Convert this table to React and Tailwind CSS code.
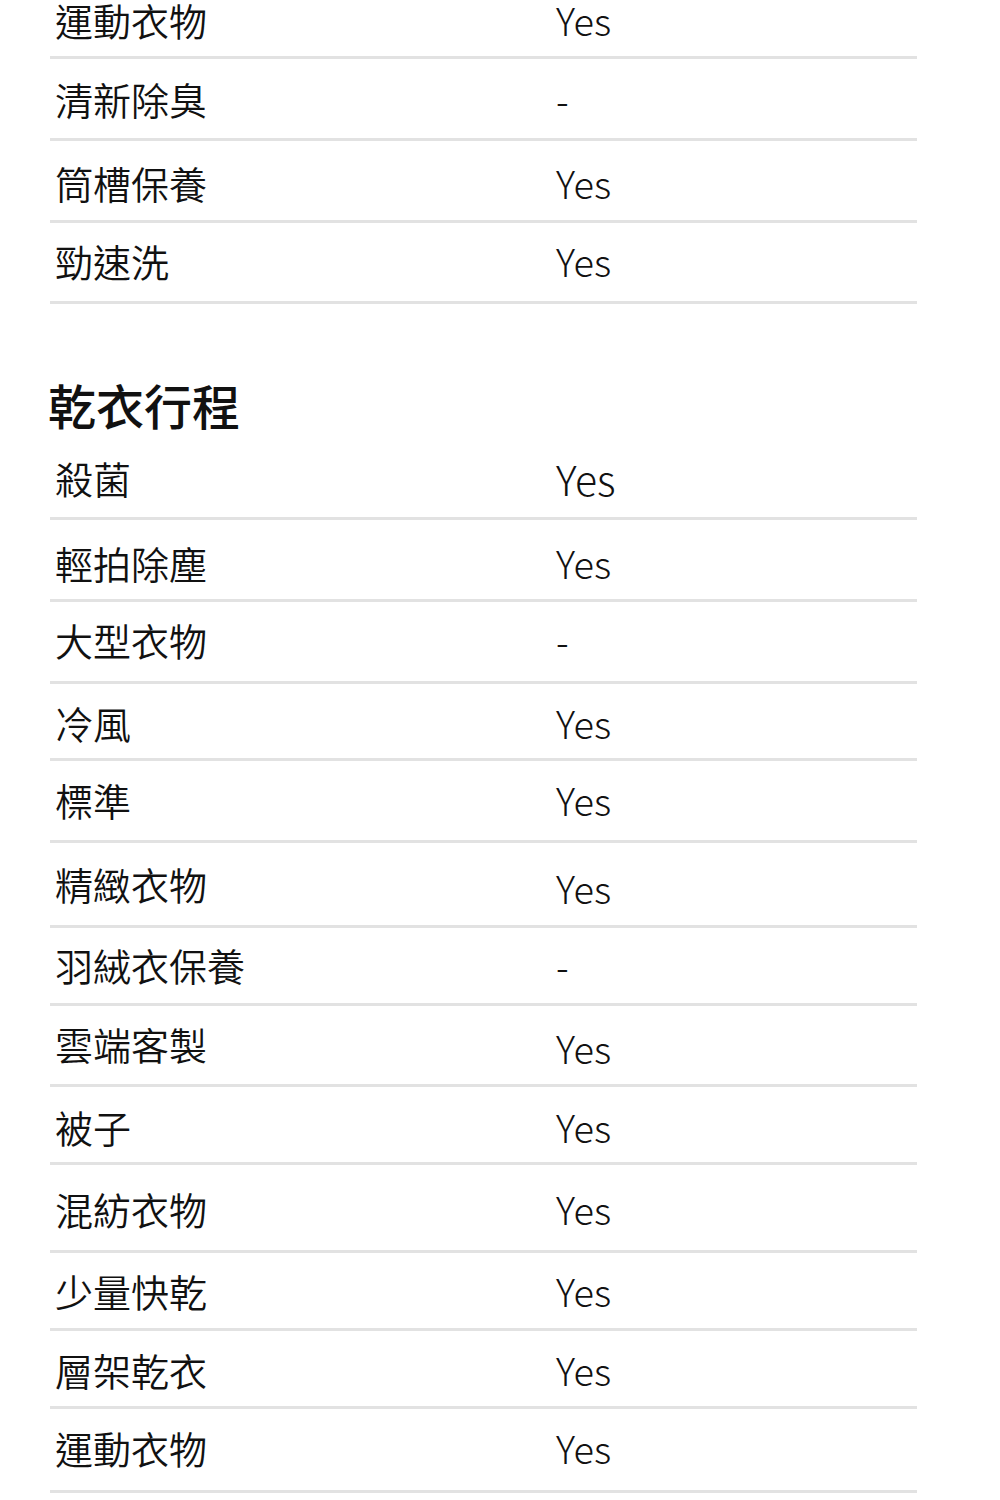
import React from 'react';

// wash / dry program rows: cls = row box height + offset of text from row top
const washRows = [
  { label: '運動衣物', value: 'Yes', cls: 'h-[59px] pt-[1px]' },
  { label: '清新除臭', value: '-', cls: 'h-[82px] pt-[21px]' },
  { label: '筒槽保養', value: 'Yes', cls: 'h-[82px] pt-[23px]' },
  { label: '勁速洗', value: 'Yes', cls: 'h-[81px] pt-[19px]' },
];

const dryRows = [
  { label: '殺菌', value: 'Yes', cls: 'h-[92px] pt-[31px]', big: true },
  { label: '輕拍除塵', value: 'Yes', cls: 'h-[82px] pt-[24px]' },
  { label: '大型衣物', value: '-', cls: 'h-[82px] pt-[19px]' },
  { label: '冷風', value: 'Yes', cls: 'h-[77px] pt-[20px]' },
  { label: '標準', value: 'Yes', cls: 'h-[82px] pt-[20px]' },
  { label: '精緻衣物', value: 'Yes', cls: 'h-[85px] pt-[22px]', vcls: 'pt-[4px]' },
  { label: '羽絨衣保養', value: '-', cls: 'h-[78px] pt-[18px]' },
  { label: '雲端客製', value: 'Yes', cls: 'h-[81px] pt-[19px]', vcls: 'pt-[4px]' },
  { label: '被子', value: 'Yes', cls: 'h-[78px] pt-[21px]' },
  { label: '混紡衣物', value: 'Yes', cls: 'h-[88px] pt-[25px]' },
  { label: '少量快乾', value: 'Yes', cls: 'h-[78px] pt-[19px]' },
  { label: '層架乾衣', value: 'Yes', cls: 'h-[78px] pt-[20px]' },
  { label: '運動衣物', value: 'Yes', cls: 'h-[84px] pt-[20px]' },
];

function Row({ row }) {
  return (
    <div className={`flex items-start border-b-[3px] border-[#e2e2e2] ${row.cls}`}>
      <div className="w-[506px] pl-[5px] text-[38px] leading-[38px] font-[350] text-[#111]">{row.label}</div>
      <div
        className={`flex-1 font-extralight leading-[38px] text-[#111] ${row.big ? 'text-[41px]' : 'text-[38px]'} ${row.vcls || ''}`}
      >
        {row.value}
      </div>
    </div>
  );
}

export default function App() {
  return (
    <div
      className="w-[1000px] min-h-[1500px] bg-white overflow-hidden"
      style={{ fontFamily: '"Noto Sans CJK TC", "Noto Sans", sans-serif' }}
    >
      <div className="ml-[50px] w-[867px]">
        {washRows.map((r, i) => (
          <Row key={'w' + i} row={r} />
        ))}

        <h2 className="mt-[76px] h-[48px] text-[48px] leading-[48px] font-medium text-[#111] -ml-[2px]">乾衣行程</h2>

        {dryRows.map((r, i) => (
          <Row key={'d' + i} row={r} />
        ))}
      </div>
    </div>
  );
}
